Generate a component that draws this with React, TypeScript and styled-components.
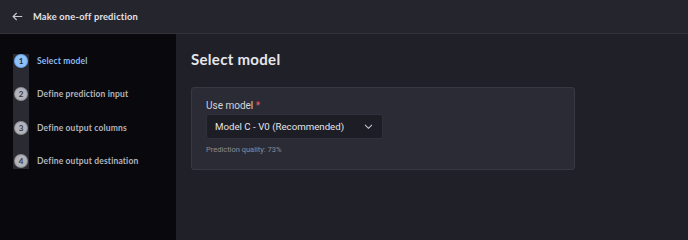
import React from 'react';
import styled, { createGlobalStyle } from 'styled-components';

const GlobalStyle = createGlobalStyle`
    html, body {
        margin: 0;
        padding: 0;
        background: #202029;
        overflow: hidden;
    }
    body {
        font-family: 'Lato', 'Liberation Sans', sans-serif;
    }
`;

const Page = styled.div`
    width: 100%;
    height: 100vh;
    display: flex;
    flex-direction: column;
    overflow: hidden;
    background: #202029;
`;

const TopBar = styled.div`
    height: 33px;
    flex-shrink: 0;
    display: flex;
    align-items: center;
    gap: 9px;
    padding-left: 11px;
    background: #25252e;
    border-bottom: 1px solid #33333c;
`;

const BackButton = styled.button`
    display: flex;
    align-items: center;
    padding: 0;
    border: none;
    background: none;
    color: #c8c8d0;
    cursor: pointer;
`;

const TopTitle = styled.div`
    font-size: 9.3px;
    font-weight: 700;
    color: #e2e2e8;
    letter-spacing: 0.2px;
`;

const Body = styled.div`
    flex: 1;
    display: flex;
    min-height: 0;
`;

const Sidebar = styled.nav`
    width: 176px;
    flex-shrink: 0;
    background: #09090d;
    padding: 20px 0 0 13px;
    box-sizing: border-box;
`;

const Steps = styled.ol`
    position: relative;
    margin: 0;
    padding: 0;
    list-style: none;
    display: flex;
    flex-direction: column;
    gap: 20px;
`;

const Track = styled.div`
    position: absolute;
    left: 0;
    top: 0;
    width: 16px;
    height: 115px;
    background: #2a2a32;
`;

const Step = styled.li`
    position: relative;
    display: flex;
    align-items: center;
    gap: 10px;
    height: 13.5px;
    padding-left: 2px;
`;

const Bullet = styled.span<{ $active?: boolean }>`
    width: 12px;
    height: 12px;
    border-radius: 50%;
    display: flex;
    align-items: center;
    justify-content: center;
    font-size: 8px;
    font-weight: 700;
    background: ${(p) => (p.$active ? '#8fc1f9' : '#b3b3bb')};
    color: ${(p) => (p.$active ? '#1b2a44' : '#3a3a42')};
    box-shadow: 0 0 0 1px ${(p) => (p.$active ? '#6fa6ea' : '#8e8e96')};
`;

const StepLabel = styled.span<{ $active?: boolean }>`
    font-size: 8.5px;
    font-weight: 700;
    color: ${(p) => (p.$active ? '#8fb8f0' : '#b4b4bc')};
    letter-spacing: 0.15px;
`;

const Main = styled.main`
    flex: 1;
    padding: 13px 0 0 15px;
`;

const Heading = styled.h1`
    margin: 0;
    font-size: 15px;
    font-weight: 700;
    color: #e6e6ec;
    line-height: 24px;
    letter-spacing: 0.3px;
`;

const Card = styled.section`
    margin-top: 16px;
    width: 384px;
    height: 83px;
    box-sizing: border-box;
    background: #2b2b35;
    border: 1px solid #383842;
    border-radius: 3px;
    padding: 12px 14px 0;
    font-family: 'Roboto', 'Liberation Sans', sans-serif;
`;

const FieldLabel = styled.label`
    display: block;
    font-size: 10px;
    color: #d4d4da;
    line-height: 12px;
`;

const Required = styled.span`
    color: #e06464;
`;

const Select = styled.button`
    margin-top: 2px;
    width: 177px;
    height: 25px;
    display: flex;
    align-items: center;
    justify-content: space-between;
    padding: 0 8px;
    box-sizing: border-box;
    background: #1d1d25;
    border: 1px solid #30303a;
    border-radius: 3px;
    font-family: inherit;
    font-size: 9.7px;
    color: #e4e4ea;
    white-space: nowrap;
    text-align: left;
    cursor: pointer;
`;

const Hint = styled.div`
    margin-top: 6px;
    font-size: 7.5px;
    color: #8c8c96;
`;

const steps = ['Select model', 'Define prediction input', 'Define output columns', 'Define output destination'];

const App: React.FC = () => {
    return (
        <Page>
            <GlobalStyle />
            <TopBar>
                <BackButton type="button" aria-label="Back">
                    <svg width="13" height="13" viewBox="0 0 24 24" fill="none" stroke="currentColor" strokeWidth="2" strokeLinecap="round" strokeLinejoin="round">
                        <path d="M20 12H4" />
                        <path d="M10 6l-6 6 6 6" />
                    </svg>
                </BackButton>
                <TopTitle>Make one-off prediction</TopTitle>
            </TopBar>
            <Body>
                <Sidebar>
                    <Steps>
                        <Track />
                        {steps.map((s, i) => (
                            <Step key={s}>
                                <Bullet $active={i === 0}>{i + 1}</Bullet>
                                <StepLabel $active={i === 0}>{s}</StepLabel>
                            </Step>
                        ))}
                    </Steps>
                </Sidebar>
                <Main>
                    <Heading>Select model</Heading>
                    <Card>
                        <FieldLabel>Use model <Required>*</Required></FieldLabel>
                        <Select type="button">
                            <span>Model C - V0 (Recommended)</span>
                            <svg width="11" height="11" viewBox="0 0 24 24" fill="none" stroke="#c8c8d0" strokeWidth="2.2" strokeLinecap="round" strokeLinejoin="round">
                                <path d="M5 9l7 7 7-7" />
                            </svg>
                        </Select>
                        <Hint>Prediction quality: 73%</Hint>
                    </Card>
                </Main>
            </Body>
        </Page>
    );
};

export default App;
